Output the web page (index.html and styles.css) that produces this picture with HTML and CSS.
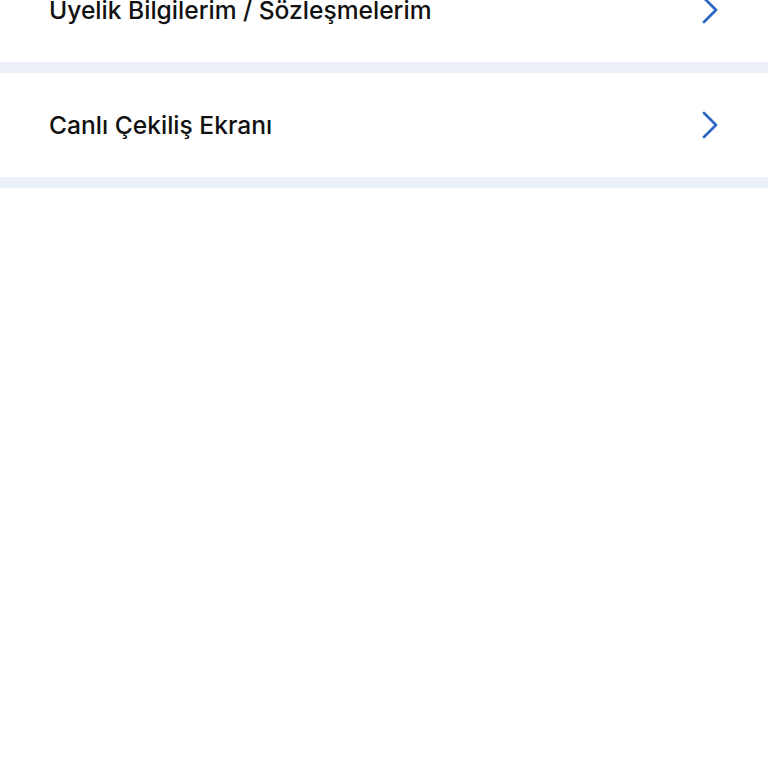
FILE: index.html
```html
<!DOCTYPE html>
<html lang="tr">
<head>
  <meta charset="UTF-8">
  <meta name="viewport" content="width=device-width, initial-scale=1.0">
  <title>Hesabım</title>
  <link rel="stylesheet" href="styles.css">
</head>
<body>
  <div class="menu">
    <div class="menu-item">
      <span class="label">Üyelik Bilgilerim / Sözleşmelerim</span>
      <svg class="chevron" width="20" height="28" viewBox="0 0 20 28">
        <path d="M5 2 L17 14 L5 26" fill="none" stroke="#2d68c4" stroke-width="2.8" stroke-linecap="round" stroke-linejoin="round"/>
      </svg>
    </div>
    <div class="divider"></div>
    <div class="menu-item">
      <span class="label">Canlı Çekiliş Ekranı</span>
      <svg class="chevron" width="20" height="28" viewBox="0 0 20 28">
        <path d="M5 2 L17 14 L5 26" fill="none" stroke="#2d68c4" stroke-width="2.8" stroke-linecap="round" stroke-linejoin="round"/>
      </svg>
    </div>
    <div class="divider"></div>
  </div>
</body>
</html>
```
FILE: styles.css
```css
body {
  margin: 0;
  background-color: #fff;
  font-family: Inter, "Noto Sans", sans-serif;
  overflow: hidden;
}

.menu {
  margin-top: -42px;
}

.menu-item {
  height: 104px;
  display: flex;
  align-items: center;
  justify-content: space-between;
  padding: 0 49px 0 49px;
}

.label {
  font-size: 24.6px;
  font-weight: 500;
  color: #111;
}

.chevron {
  display: block;
}

.divider {
  height: 11px;
  background-color: #ebf0f8;
}
```
